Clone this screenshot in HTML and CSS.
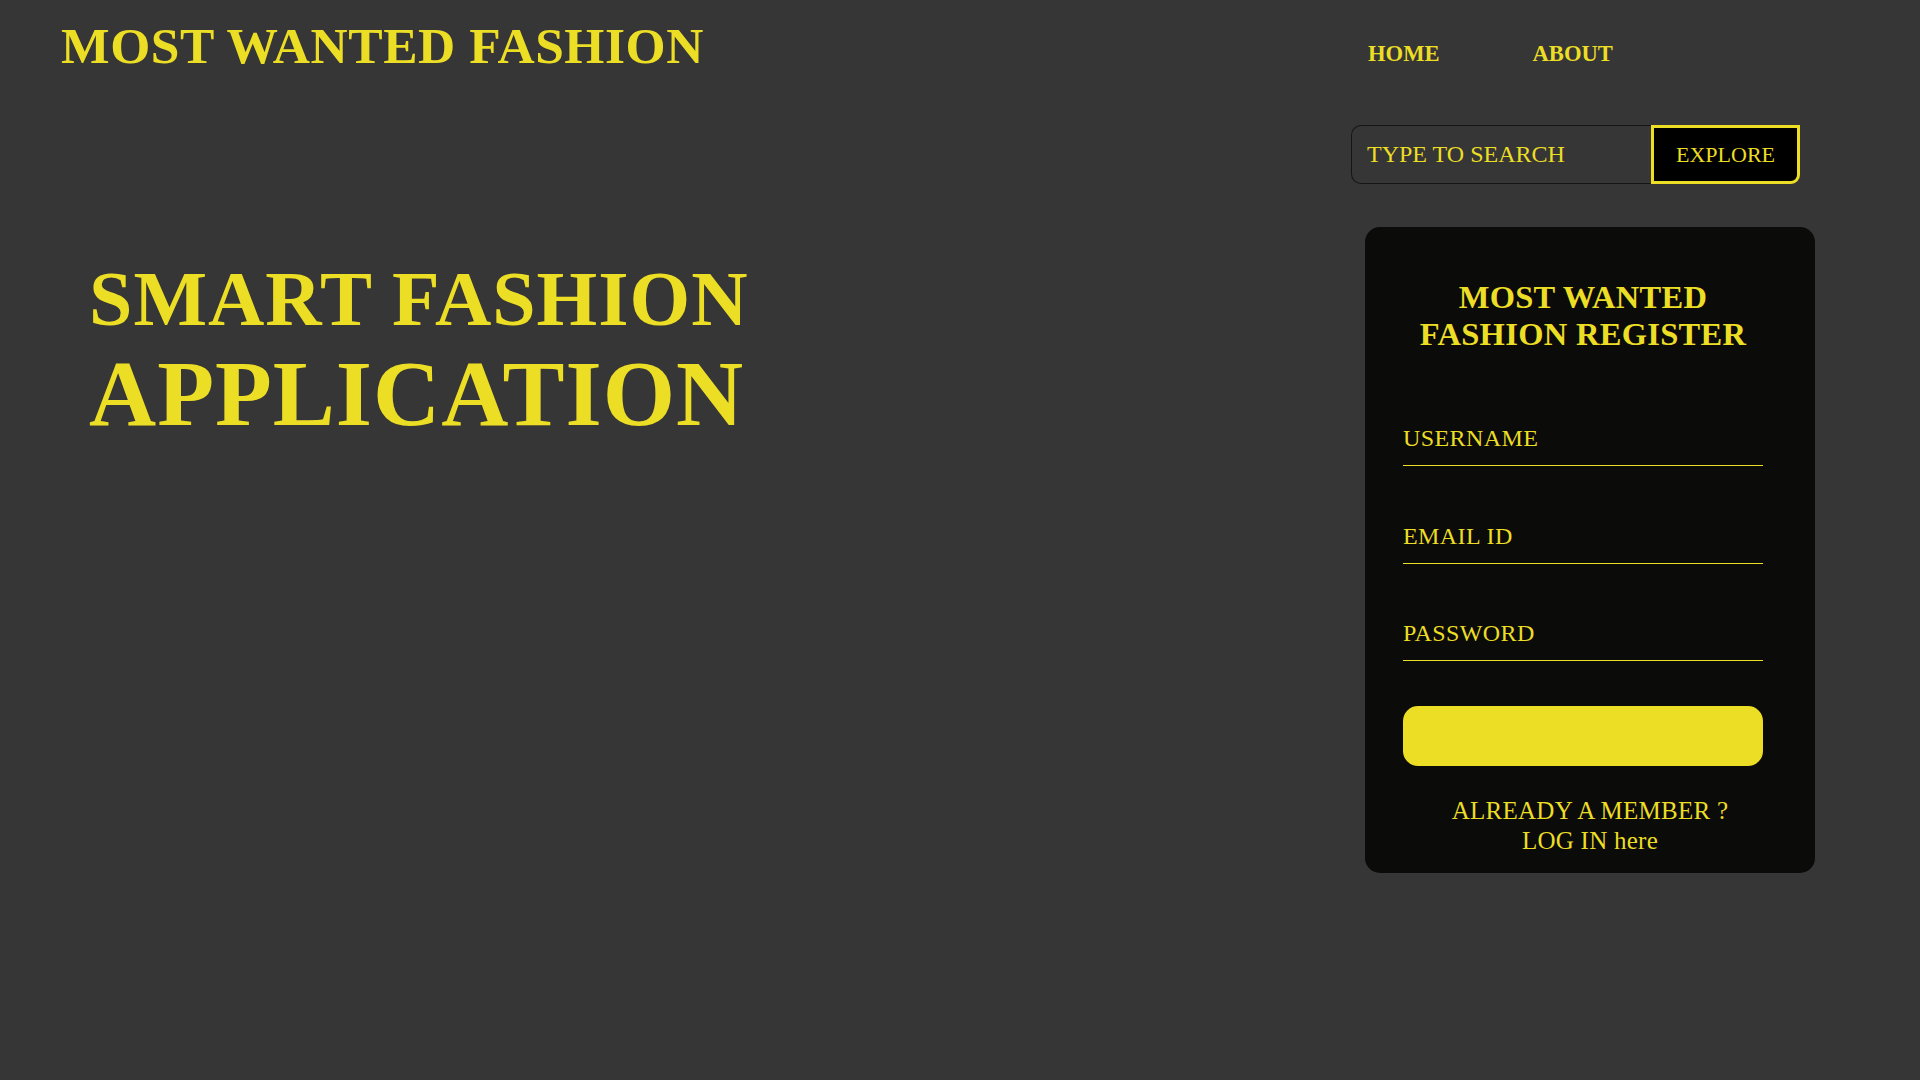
FILE: index.html
```html
<!DOCTYPE html>
<html lang="en">
<head>
<meta charset="utf-8">
<title>Most Wanted Fashion</title>
<link rel="stylesheet" href="styles.css">
</head>
<body>
<div class="page">
  <div class="left-col">
    <h1 class="logo">MOST WANTED FASHION</h1>
    <div class="hero">
      <div class="hero-line1">SMART FASHION</div>
      <div class="hero-line2">APPLICATION</div>
    </div>
  </div>
  <div class="right-col">
    <nav class="nav">
      <a class="nav-link" href="#">HOME</a>
      <a class="nav-link nav-link-about" href="#">ABOUT</a>
    </nav>
    <form class="search" onsubmit="return false">
      <input class="search-input" type="text" placeholder="TYPE TO SEARCH">
      <button class="search-btn" type="button">EXPLORE</button>
    </form>
    <div class="card">
      <div class="card-form">
        <h2 class="card-title">MOST WANTED<br>FASHION REGISTER</h2>
        <input class="field field-first" type="text" placeholder="USERNAME">
        <input class="field" type="email" placeholder="EMAIL ID">
        <input class="field" type="password" placeholder="PASSWORD">
        <button class="submit" type="button"></button>
      </div>
      <p class="member">ALREADY A MEMBER ?<br>LOG IN here</p>
    </div>
  </div>
</div>
</body>
</html>
```
FILE: styles.css
```css
html, body {
  margin: 0;
  padding: 0;
}
body {
  background: #363636;
  color: #ecdd25;
  font-family: "Liberation Serif", "Times New Roman", serif;
  width: 1920px;
  height: 1080px;
  overflow: hidden;
}
.page {
  display: flex;
  justify-content: space-between;
  align-items: flex-start;
}
.left-col {
  padding-left: 61px;
  padding-top: 16px;
}
.logo {
  margin: 0;
  font-size: 51.5px;
  line-height: 60px;
  font-weight: bold;
  letter-spacing: 0.55px;
  white-space: nowrap;
}
.hero {
  margin-top: 178px;
  margin-left: 28px;
  font-weight: bold;
  white-space: nowrap;
}
.hero-line1 {
  font-size: 78px;
  line-height: 90px;
  letter-spacing: 1px;
}
.hero-line2 {
  font-size: 93px;
  line-height: 100px;
  letter-spacing: 1px;
}
.right-col {
  width: 465px;
  margin-right: 105px;
  display: flex;
  flex-direction: column;
  align-items: flex-start;
}
.nav {
  display: flex;
  padding-top: 39px;
  padding-left: 18px;
}
.nav-link {
  color: #ecdd25;
  text-decoration: none;
  font-weight: bold;
  font-size: 22.6px;
  line-height: 30px;
}
.nav-link-about {
  margin-left: 93px;
}
.search {
  display: flex;
  margin: 56px 0 0 1px;
}
.search-input {
  box-sizing: border-box;
  width: 300px;
  height: 59px;
  margin: 0;
  padding: 0 0 0 15px;
  background: transparent;
  border: 1px solid #151515;
  border-right: none;
  border-radius: 10px 0 0 10px;
  color: #ecdd25;
  font-family: "Liberation Serif", "Times New Roman", serif;
  font-size: 24px;
  outline: none;
}
.search-input::placeholder {
  color: #ecdd25;
  opacity: 1;
}
.search-btn {
  box-sizing: border-box;
  width: 149px;
  height: 59px;
  margin: 0;
  padding: 0;
  background: #000;
  border: 3px solid #ecdd25;
  border-radius: 0 0 9px 0;
  color: #ecdd25;
  font-family: "Liberation Serif", "Times New Roman", serif;
  font-size: 22px;
}
.card {
  box-sizing: border-box;
  width: 450px;
  margin: 43px 0 0 15px;
  padding: 52px 0 17px;
  background: #0b0b0a;
  border-radius: 15px;
}
.card-form {
  width: 360px;
  margin-left: 38px;
  display: flex;
  flex-direction: column;
}
.card-title {
  margin: 0;
  text-align: center;
  font-size: 32.5px;
  line-height: 37px;
  font-weight: bold;
  letter-spacing: 0.3px;
}
.field {
  box-sizing: border-box;
  width: 360px;
  height: 54px;
  margin: 43.5px 0 0;
  padding: 0;
  background: transparent;
  border: none;
  border-bottom: 1px solid #ecdd25;
  color: #ecdd25;
  font-family: "Liberation Serif", "Times New Roman", serif;
  font-size: 24px;
  letter-spacing: 0.4px;
  outline: none;
}
.field-first {
  margin-top: 59px;
}
.field::placeholder {
  color: #ecdd25;
  opacity: 1;
}
.submit {
  width: 360px;
  height: 60px;
  margin-top: 45px;
  padding: 0;
  border: none;
  border-radius: 15px;
  background: #ecdd25;
}
.member {
  margin: 30px 0 0;
  text-align: center;
  font-size: 25px;
  line-height: 30px;
  letter-spacing: 0.25px;
}
```
